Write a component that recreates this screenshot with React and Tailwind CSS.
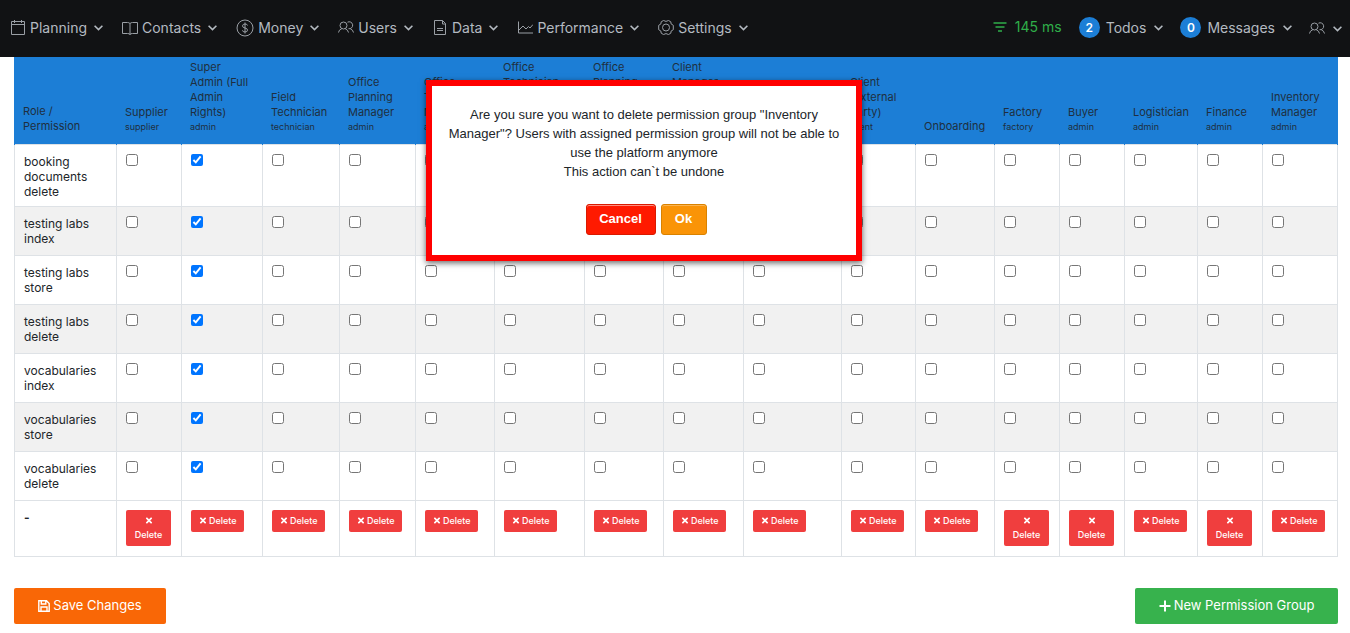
import React, { useState } from 'react';
import { FaTimes } from 'react-icons/fa';

// Thin line icons for the top navigation
const icons = {
  calendar: (
    <svg className="w-4 h-4" viewBox="0 0 16 16" fill="none" stroke="currentColor">
      <path d="M1.500 1.500h13v13h-13zM1.500 4.500h13M4.500 0v3M11.500 0v3" />
    </svg>
  ),
  book: (
    <svg className="w-4 h-4" viewBox="0 0 16 16" fill="none" stroke="currentColor">
      <path d="M8 3.500Q7 2.500 5.500 2.500H.5v11h5Q7.500 13.500 8 14.500Q8.500 13.500 10.500 13.500h5v-11h-5Q9 2.500 8 3.500zV15" />
    </svg>
  ),
  dollar: (
    <svg className="w-[18px] h-[18px]" viewBox="0 0 18 18" fill="none" stroke="currentColor">
      <circle cx="9" cy="9" r="8" />
      <path d="M11.500 6.500Q11.300 5 9 5T6.500 6.900Q6.500 8.600 9 9T11.500 11.100Q11.500 13 9 13T6.500 11.300M9 3.500v11" />
    </svg>
  ),
  users: (
    <svg className="w-4 h-4" viewBox="0 0 16 16" fill="none" stroke="currentColor">
      <circle cx="5.500" cy="5.500" r="3.500" />
      <path d="M.5 12.500Q.8 9.800 3.800 8.700M7.200 8.700Q10 9.800 10.500 12.500M9.500 2.200A3.500 3.500 0 1 1 10.500 8.700M12.300 8.800Q15 9.800 15.500 12.500" />
    </svg>
  ),
  file: (
    <svg className="w-4 h-4" viewBox="0 0 16 16" fill="none" stroke="currentColor">
      <path d="M2.500 .5h8l3 3v11h-11zM10.500 .5v3.500h3M5 8.500h6M5 10.500h6" />
    </svg>
  ),
  chart: (
    <svg className="w-4 h-4" viewBox="0 0 16 16" fill="none" stroke="currentColor">
      <path d="M1.500 1.500v11.500H16M2 10L6 6L9 9L11.500 6.500L13 8L16 4.500" />
    </svg>
  ),
  gear: (
    <svg className="w-4 h-4" viewBox="0 0 16 16" fill="none" stroke="currentColor">
      <circle cx="8" cy="7.500" r="3.500" />
      <path d="M5.500.5Q8 2.300 10.500.5L12.800 1.800Q12.200 4.300 15.300 5.300V9.700Q12.200 10.700 12.800 13.200L10.500 14.500Q8 12.700 5.500 14.500L3.200 13.200Q3.800 10.700.7 9.700V5.300Q3.800 4.300 3.200 1.800z" />
    </svg>
  ),
};

const menu = [
  { label: 'Planning', icon: 'calendar' },
  { label: 'Contacts', icon: 'book' },
  { label: 'Money', icon: 'dollar' },
  { label: 'Users', icon: 'users' },
  { label: 'Data', icon: 'file' },
  { label: 'Performance', icon: 'chart' },
  { label: 'Settings', icon: 'gear' },
];

const roles = [
  { name: 'Supplier', type: 'supplier', width: 65, narrow: true },
  { name: 'Super Admin (Full Admin Rights)', type: 'admin', width: 81 },
  { name: 'Field Technician', type: 'technician', width: 77 },
  { name: 'Office Planning Manager', type: 'admin', width: 76 },
  { name: 'Office Team Manager', type: 'admin', width: 79 },
  { name: 'Office Technician Planning Manager', type: 'admin', width: 90 },
  { name: 'Office Planning Team Manager', type: 'admin', width: 79 },
  { name: 'Client Manager (Internal Party)', type: 'client', width: 80 },
  { name: 'Client Coordinator', type: 'client', width: 98 },
  { name: 'Client (External Party)', type: 'client', width: 74 },
  { name: 'Onboarding', type: '', width: 79 },
  { name: 'Factory', type: 'factory', width: 65, narrow: true },
  { name: 'Buyer', type: 'admin', width: 65, narrow: true },
  { name: 'Logistician', type: 'admin', width: 73 },
  { name: 'Finance', type: 'admin', width: 65, narrow: true },
  { name: 'Inventory Manager', type: 'admin', width: 75 },
];

const permissions = [
  'booking documents delete',
  'testing labs index',
  'testing labs store',
  'testing labs delete',
  'vocabularies index',
  'vocabularies store',
  'vocabularies delete',
];

const Chevron = () => (
  <svg className="w-[9px] h-[6px]" viewBox="0 0 9 6" fill="none" stroke="currentColor" strokeWidth="1.6">
    <path d="M.6.8L4.500 4.600L8.400.8" />
  </svg>
);

const Navbar = () => (
  <nav className="flex h-[57px] items-center justify-between bg-[#111214] pl-[10px] pr-2 pb-[2px] text-sm text-[#b4bac1]">
    <div className="flex items-center gap-[19px]">
      {menu.map((item) => (
        <button key={item.label} type="button" className="flex items-center gap-1">
          <span className="text-[#9a9fa5]">{icons[item.icon]}</span>
          <span>{item.label}</span>
          <span className="pl-[3px]"><Chevron /></span>
        </button>
      ))}
    </div>
    <div className="flex items-center gap-[17px]">
      <span className="flex items-center gap-2 pb-[2px] text-[#2fae49]">
        <svg className="w-[14px] h-[10px]" viewBox="0 0 14 10" fill="none" stroke="currentColor" strokeWidth="1.500">
          <path d="M.5 1h13M2.500 5h9M5 9h4" />
        </svg>
        145 ms
      </span>
      <button type="button" className="flex items-center gap-[6px]">
        <span className="flex h-[21px] w-[21px] items-center justify-center rounded-full bg-[#1c7ed6] text-xs font-semibold text-white">2</span>
        <span>Todos</span>
        <span className="pl-[2px]"><Chevron /></span>
      </button>
      <button type="button" className="flex items-center gap-[6px]">
        <span className="flex h-[21px] w-[21px] items-center justify-center rounded-full bg-[#1c7ed6] text-xs font-semibold text-white">0</span>
        <span>Messages</span>
        <span className="pl-[2px]"><Chevron /></span>
      </button>
      <button type="button" aria-label="Account" className="flex items-center gap-2 pt-[2px]">
        <span className="text-[#9a9fa5]">{icons.users}</span>
        <Chevron />
      </button>
    </div>
  </nav>
);

const DeleteButton = ({ narrow }) => (
  <button
    type="button"
    className={`block rounded-[2px] bg-[#f03e3e] py-1 text-[9px] font-medium leading-[14px] text-white ${narrow ? 'w-[45px] px-2' : 'w-[53px] whitespace-nowrap'}`}
  >
    <FaTimes className="inline h-[9px] w-[8px] align-[-1px]" /> Delete
  </button>
);

const PermissionTable = () => {
  // Only the super admin column starts checked
  const [checked, setChecked] = useState(
    Object.fromEntries(permissions.map((permission) => [`${permission}-1`, true]))
  );

  const handleToggle = (key) => {
    setChecked({ ...checked, [key]: !checked[key] });
  };

  return (
    <table className="w-full table-fixed border-collapse text-xs text-[#212529]">
      <colgroup>
        <col style={{ width: `${(102 / 1323) * 100}%` }} />
        {roles.map((role) => (
          <col key={role.name} style={{ width: `${(role.width / 1323) * 100}%` }} />
        ))}
      </colgroup>
      <thead>
        <tr className="h-[87px] bg-[#1c7ed6] text-left align-bottom text-[11px] leading-[15px] text-[#1f2f40]">
          <th className="border-x border-[#1c7ed6] pl-2 pr-5 pb-[10px] font-normal">Role / Permission</th>
          {roles.map((role) => (
            <th
              key={role.name}
              className={`border-x border-[#1c7ed6] pl-2 pr-[9px] font-normal ${role.type ? 'pb-[11px]' : 'pb-[10px]'}`}
            >
              {role.name}
              {role.type && <small className="block text-[9px] leading-[13px]">{role.type}</small>}
            </th>
          ))}
        </tr>
      </thead>
      <tbody>
        {permissions.map((permission) => (
          <tr key={permission} className="h-[49px] align-top odd:bg-white even:bg-[#f1f1f1]">
            <td className="border border-[#dee2e6] pl-[9px] pr-5 pt-[9px] pb-[7px] leading-[15px]">{permission}</td>
            {roles.map((role, index) => {
              const key = `${permission}-${index}`;
              return (
                <td key={role.name} className="border border-[#dee2e6] pl-[9px] pt-[9px]">
                  <input
                    type="checkbox"
                    aria-label={`${role.name}: ${permission}`}
                    className="block h-3 w-3"
                    checked={!!checked[key]}
                    onChange={() => handleToggle(key)}
                  />
                </td>
              );
            })}
          </tr>
        ))}
        <tr className="h-14 align-top">
          <td className="border border-[#dee2e6] pl-[9px] pt-[9px] font-bold">-</td>
          {roles.map((role) => (
            <td key={role.name} className="border border-[#dee2e6] pl-[9px] pt-[9px] pb-[9px]">
              <DeleteButton narrow={role.narrow} />
            </td>
          ))}
        </tr>
      </tbody>
    </table>
  );
};

// Confirmation shown on top of the table
const ConfirmDialog = ({ onClose }) => (
  <div
    role="dialog"
    aria-label="Delete permission group"
    className="absolute left-[426px] top-20 w-[436px] border-[6px] border-[#ff0000] bg-white px-3 pt-[19px] pb-5 text-center font-['Liberation_Sans',Arial,sans-serif] text-[13px] text-[#212529] shadow-[0_2px_6px_rgba(0,0,0,0.6)]"
  >
    <p className="leading-[19px]">
      Are you sure you want to delete permission group "Inventory Manager"? Users with assigned permission group will not be able to use the platform anymore
      <br />
      This action can`t be undone
    </p>
    <div className="mt-[23px] flex justify-center gap-[5px] pl-1 font-bold text-white [text-shadow:1px_1px_1px_rgba(0,0,0,0.6)]">
      <button type="button" onClick={onClose} className="h-[31px] w-[70px] rounded-[3px] border border-[#d91a00] bg-[#ff1a00] pb-[2px] shadow-[inset_0_1px_0_rgba(255,255,255,0.5)]">Cancel</button>
      <button type="button" onClick={onClose} className="h-[31px] w-[46px] rounded-[3px] border border-[#d98200] bg-[#fa9407] pb-[2px] shadow-[inset_0_1px_0_rgba(255,255,255,0.3)]">Ok</button>
    </div>
  </div>
);

const App = () => {
  const [showDialog, setShowDialog] = useState(true);

  return (
    <div className="relative min-h-screen bg-white font-['Inter',sans-serif]">
      <Navbar />
      <main className="pl-[14px] pr-3">
        <PermissionTable />
        <div className="mt-[31px] flex items-center justify-between text-[13px] text-white">
          <button type="button" className="flex h-9 w-[152px] items-center justify-center gap-[3px] rounded-[2px] bg-[#f96706]">
            <svg className="h-3 w-3" viewBox="0 0 12 12" fill="none" stroke="currentColor" strokeWidth="1.400">
              <path d="M.8.8h7.700l2.700 2.700v7.700H.8zM3.300 1v3h4.500V1M3 11V7h6v4" />
            </svg>
            Save Changes
          </button>
          <button type="button" className="flex h-9 w-[203px] items-center justify-center gap-[3px] rounded-[2px] bg-[#37b24d]">
            <svg className="h-3 w-3" viewBox="0 0 12 12" fill="none" stroke="currentColor" strokeWidth="2">
              <path d="M6 .5v11M.5 6h11" />
            </svg>
            New Permission Group
          </button>
        </div>
      </main>
      {showDialog && <ConfirmDialog onClose={() => setShowDialog(false)} />}
    </div>
  );
};

export default App;
